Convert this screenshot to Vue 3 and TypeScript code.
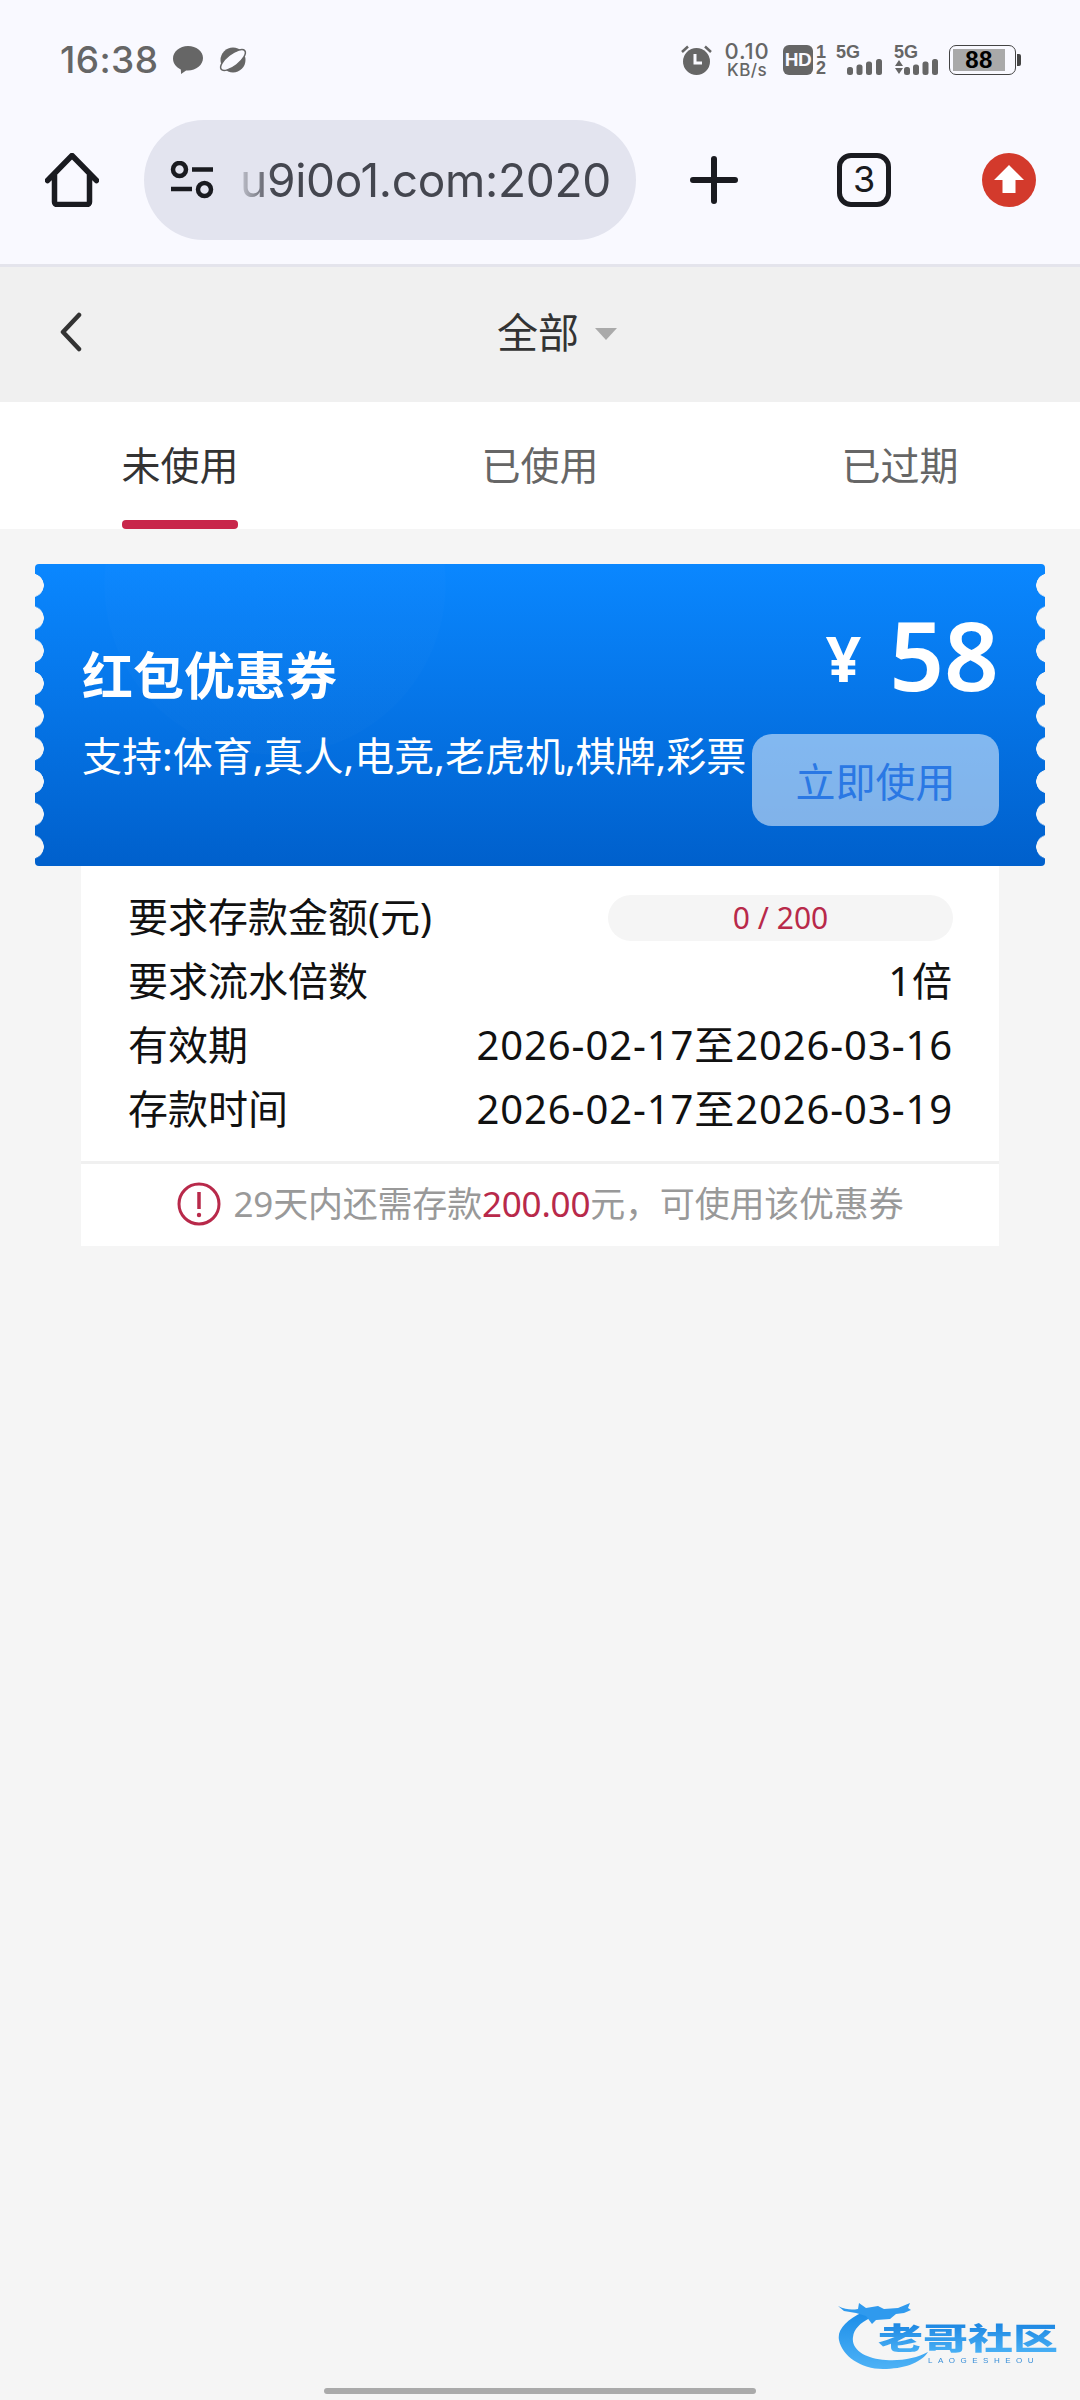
<script setup lang="ts">
interface DetailRow {
  label: string;
  value: string;
  pill?: boolean;
}

const tabs: string[] = ['未使用', '已使用', '已过期'];
const activeTab = 0;

const rows: DetailRow[] = [
  { label: '要求存款金额(元)', value: '0 / 200', pill: true },
  { label: '要求流水倍数', value: '1倍' },
  { label: '有效期', value: '2026-02-17至2026-03-16' },
  { label: '存款时间', value: '2026-02-17至2026-03-19' },
];
</script>

<template>
  <div class="page">
    <header class="chrome">
      <div class="status">
        <div class="status-left">
          <span class="time">16:38</span>
          <svg class="bubble" viewBox="0 0 30 28">
            <path d="M15 0C6.700 0 0 5.600 0 12.600c0 4.800 3.100 8.900 7.800 11l.3 4.400 5-3.500c.6.100 1.300.1 1.900.1 8.300 0 15-5.600 15-12.500S23.300 0 15 0z" fill="#666" />
          </svg>
          <svg class="planet" viewBox="0 0 30 26">
            <circle cx="15" cy="13" r="12.500" fill="#666" />
            <ellipse cx="15" cy="13" rx="15" ry="6" transform="rotate(-38 15 13)" fill="#f9f9ff" stroke="#666" stroke-width="1.500" />
          </svg>
        </div>
        <div class="status-right">
          <svg class="alarm" viewBox="0 0 31 30">
            <circle cx="15.500" cy="16.500" r="13.500" fill="#666" />
            <path d="M14 9v9h7" stroke="#f9f9ff" stroke-width="3" fill="none" />
            <path d="M1 7l6-5.500M30 7l-6-5.500" stroke="#666" stroke-width="2.500" fill="none" />
          </svg>
          <div class="speed">
            <span class="speed-num">0.10</span>
            <span class="speed-unit">KB/s</span>
          </div>
          <div class="hd">
            <span class="hd-box">HD</span>
            <span class="hd-nums"><i>1</i><i>2</i></span>
          </div>
          <div class="signal">
            <span class="five-g">5G</span>
            <svg class="bars" viewBox="0 0 35 16">
              <rect x="0" y="8" width="6" height="8" rx="2.500" fill="#666" />
              <rect x="9.500" y="5.500" width="6" height="10.500" rx="2.500" fill="#666" />
              <rect x="19" y="2.500" width="6" height="13.500" rx="2.500" fill="#666" />
              <rect x="29" y="0" width="6" height="16" rx="2.500" fill="#666" />
            </svg>
          </div>
          <div class="signal signal-two">
            <span class="five-g">5G</span>
            <svg class="bars bars-two" viewBox="0 0 44 16">
              <path d="M1 7l4-6 4 6zM1 9l4 6 4-6z" fill="#666" />
              <rect x="10" y="8" width="6" height="8" rx="2.500" fill="#666" />
              <rect x="19" y="5.500" width="6" height="10.500" rx="2.500" fill="#666" />
              <rect x="28.500" y="2.500" width="6" height="13.500" rx="2.500" fill="#666" />
              <rect x="38" y="0" width="6" height="16" rx="2.500" fill="#666" />
            </svg>
          </div>
          <div class="battery">
            <div class="battery-body">
              <div class="battery-fill">88</div>
            </div>
            <span class="battery-nub"></span>
          </div>
        </div>
      </div>

      <div class="toolbar">
        <svg class="tool-icon" viewBox="0 0 54 54">
          <path d="M2.500 27.500L27 2.500l24.500 25M9.500 22v27a2.500 2.500 0 0 0 2.500 2.500h30a2.500 2.500 0 0 0 2.500-2.500V22" fill="none" stroke="#1a1b20" stroke-width="5.500" stroke-linecap="round" stroke-linejoin="round" />
        </svg>
        <div class="omnibox">
          <svg class="tune" viewBox="0 0 44 38">
            <circle cx="9.500" cy="8.500" r="6.500" fill="none" stroke="#1a1b20" stroke-width="4.500" />
            <path d="M22 8.500h21M1 28h21" stroke="#1a1b20" stroke-width="4.500" />
            <circle cx="34.500" cy="28.500" r="6.500" fill="none" stroke="#1a1b20" stroke-width="4.500" />
          </svg>
          <span class="url">u9i0o1.com:2020</span>
        </div>
        <svg class="plus" viewBox="0 0 48 48">
          <path d="M3 24h42M24 3v42" stroke="#1a1b20" stroke-width="6" stroke-linecap="round" />
        </svg>
        <div class="tab-count">3</div>
        <svg class="tool-icon upgrade" viewBox="0 0 54 54">
          <circle cx="27" cy="27" r="27" fill="#d33a2c" />
          <path d="M27 12L12 27h8.500v13h13V27H42z" fill="#fff" />
        </svg>
      </div>
    </header>

    <div class="title-bar">
      <svg class="back" viewBox="0 0 24 40">
        <path d="M20 3L4 20l16 17" fill="none" stroke="#333" stroke-width="4.500" stroke-linecap="round" stroke-linejoin="round" />
      </svg>
      <div class="title">
        <span>全部</span>
        <i class="caret"></i>
      </div>
    </div>

    <nav class="tabs">
      <div
        v-for="(tab, index) in tabs"
        :key="tab"
        class="tab"
        :class="{ active: index === activeTab }"
      >
        <span class="tab-label">{{ tab }}</span>
        <i class="tab-bar"></i>
      </div>
    </nav>

    <section class="coupon">
      <div class="coupon-left">
        <h2 class="coupon-name">红包优惠券</h2>
        <p class="coupon-support">支持:体育,真人,电竞,老虎机,棋牌,彩票</p>
      </div>
      <div class="coupon-right">
        <div class="amount">
          <span class="yen">¥</span>
          <span class="money">58</span>
        </div>
        <button class="use-btn">立即使用</button>
      </div>
    </section>

    <section class="detail">
      <div class="rows">
        <div v-for="row in rows" :key="row.label" class="row">
          <span class="row-text">{{ row.label }}</span>
          <span v-if="row.pill" class="pill">{{ row.value }}</span>
          <span v-else class="row-text row-value">{{ row.value }}</span>
        </div>
      </div>
      <div class="notice">
        <svg class="notice-icon" viewBox="0 0 44 44">
          <circle cx="22" cy="22" r="20" fill="none" stroke="#b8294a" stroke-width="3" />
          <path d="M22 10v17" stroke="#b8294a" stroke-width="3.500" />
          <circle cx="22" cy="33" r="2.200" fill="#b8294a" />
        </svg>
        <span class="notice-text">29天内还需存款<b>200.00</b>元，可使用该优惠券</span>
      </div>
    </section>

    <div class="watermark">
      <svg class="dragon" viewBox="0 0 110 70">
        <defs>
          <linearGradient id="dragon-fill" x1="0" y1="0" x2="0" y2="1">
            <stop offset="0" stop-color="#1c8de8" />
            <stop offset="1" stop-color="#4db2f6" />
          </linearGradient>
        </defs>
        <path d="M25 12C8 20-1 30 1 40c3 16 22 29 44 29 20 0 38-6 45-17-11 6-26 9-42 8C28 59 13 50 15 37c1-8 7-14 17-19z" fill="url(#dragon-fill)" />
        <path d="M0 6c8 4 14 4 20 3l1-6 7 5 12-2 6 3 14-1 12-5-2 5 3 2-7 3-8 1-6 5-14 1-4 4-6-8-10-3-12-2z" fill="#2f9aee" />
      </svg>
      <div class="wm-text">
        <span class="wm-cn">老哥社区</span>
        <span class="wm-en">LAOGESHEOU</span>
      </div>
    </div>

    <i class="home-bar"></i>
  </div>
</template>

<style scoped>
.page {
  position: relative;
  width: 1080px;
  height: 2400px;
  overflow: hidden;
  background: #f5f5f5;
  font-family: "Noto Sans", "Noto Sans CJK SC", sans-serif;
  color: #111;
}

.chrome {
  background: #f9f9ff;
  border-bottom: 3px solid #e4e4ec;
  padding-bottom: 24px;
}

.status {
  height: 120px;
  padding: 0 59px 0 60px;
  display: flex;
  align-items: center;
  justify-content: space-between;
}

.status-left {
  display: flex;
  align-items: center;
}

.time {
  width: 97px;
  font-family: Inter, sans-serif;
  font-size: 37px;
  font-weight: 500;
  line-height: 44px;
  color: #666;
  letter-spacing: 0.4px;
  white-space: nowrap;
}

.bubble {
  width: 30px;
  height: 28px;
  margin-left: 16px;
}

.planet {
  width: 30px;
  height: 26px;
  margin-left: 15px;
}

.status-right {
  display: flex;
  align-items: center;
  height: 34px;
  color: #666;
}

.alarm {
  width: 31px;
  height: 30px;
}

.speed {
  width: 46px;
  margin-left: 12px;
  display: flex;
  flex-direction: column;
  align-items: center;
  font-family: Inter, sans-serif;
  font-weight: 500;
  white-space: nowrap;
}

.speed-num {
  font-size: 22px;
  line-height: 20px;
  letter-spacing: 0.8px;
}

.speed-unit {
  font-size: 17px;
  line-height: 18px;
  letter-spacing: 0.4px;
}

.hd {
  width: 43px;
  margin-left: 13px;
  display: flex;
  align-items: center;
  justify-content: space-between;
}

.hd-box {
  width: 30px;
  height: 30px;
  border-radius: 6px;
  background: #666;
  color: #f9f9ff;
  font-family: "Liberation Sans", sans-serif;
  font-size: 19px;
  font-weight: 700;
  line-height: 30px;
  text-align: center;
  letter-spacing: -0.5px;
}

.hd-nums {
  display: flex;
  flex-direction: column;
  align-items: center;
  font-family: "Liberation Sans", sans-serif;
  font-size: 18px;
  font-weight: 700;
  line-height: 16px;
}

.hd-nums i {
  font-style: normal;
}

.signal {
  position: relative;
  width: 46px;
  height: 30px;
  margin-left: 10px;
}

.signal-two {
  width: 44px;
  margin-left: 12px;
}

.five-g {
  display: block;
  font-family: "Liberation Sans", sans-serif;
  font-size: 18px;
  font-weight: 700;
  line-height: 14px;
}

.bars {
  position: absolute;
  right: 0;
  bottom: 0;
  width: 35px;
  height: 16px;
}

.bars-two {
  width: 44px;
}

.battery {
  width: 72px;
  margin-left: 11px;
  display: flex;
  align-items: center;
}

.battery-body {
  width: 67px;
  height: 30px;
  padding: 3px;
  border: 1.5px solid #444;
  border-radius: 7px;
  box-sizing: border-box;
}

.battery-fill {
  width: 52px;
  height: 100%;
  background: #a9a9a9;
  color: #000;
  font-family: "Liberation Sans", sans-serif;
  font-size: 24px;
  font-weight: 700;
  line-height: 21px;
  text-align: center;
  letter-spacing: 0.5px;
}

.battery-nub {
  width: 4px;
  height: 12px;
  margin-left: 1px;
  background: #444;
  border-radius: 0 2px 2px 0;
}

.toolbar {
  height: 120px;
  display: flex;
  align-items: center;
  padding-left: 45px;
}

.tool-icon {
  width: 54px;
  height: 54px;
}

.omnibox {
  width: 492px;
  height: 120px;
  margin-left: 45px;
  padding-left: 26px;
  box-sizing: border-box;
  display: flex;
  align-items: center;
  background: #e3e4ef;
  border-radius: 60px;
}

.tune {
  width: 44px;
  height: 38px;
}

.url {
  margin-left: 26px;
  font-family: Inter, sans-serif;
  font-size: 46px;
  line-height: 60px;
  letter-spacing: -0.3px;
  color: #44464f;
  white-space: nowrap;
  -webkit-mask-image: linear-gradient(90deg, rgba(0, 0, 0, 0.2), #000 34px);
  mask-image: linear-gradient(90deg, rgba(0, 0, 0, 0.2), #000 34px);
}

.plus {
  width: 48px;
  height: 48px;
  margin-left: 54px;
}

.tab-count {
  width: 54px;
  height: 54px;
  margin-left: 99px;
  box-sizing: border-box;
  border: 5.5px solid #1a1b20;
  border-radius: 14px;
  font-family: Inter, sans-serif;
  font-size: 36px;
  line-height: 43px;
  text-align: center;
  color: #1a1b20;
}

.upgrade {
  margin-left: 91px;
}

.title-bar {
  position: relative;
  height: 135px;
  background: #f0f0f0;
  display: flex;
  align-items: center;
  justify-content: center;
}

.back {
  position: absolute;
  left: 59px;
  top: 45px;
  width: 24px;
  height: 40px;
}

.title {
  display: flex;
  align-items: center;
  margin-left: 34px;
  font-size: 41px;
  line-height: 56px;
  color: #333;
  transform: translateY(-3px);
}

.caret {
  width: 0;
  height: 0;
  margin-left: 16px;
  margin-top: 4px;
  border-left: 11px solid transparent;
  border-right: 11px solid transparent;
  border-top: 12px solid #aaa;
}

.tabs {
  height: 127px;
  background: #fff;
  display: grid;
  grid-template-columns: repeat(3, 360px);
}

.tab {
  display: flex;
  flex-direction: column;
  align-items: center;
  padding-top: 37px;
  color: #666;
}

.tab.active {
  color: #333;
}

.tab-label {
  font-size: 39px;
  line-height: 52px;
}

.tab-bar {
  width: 116px;
  height: 9px;
  margin-top: 29px;
  border-radius: 4px;
}

.tab.active .tab-bar {
  background: #c8264a;
}

.coupon {
  position: relative;
  height: 302px;
  margin: 35px 35px 0;
  padding: 0 46px 0 47px;
  display: flex;
  justify-content: space-between;
  color: #fff;
  border-radius: 4px;
  background:
    radial-gradient(circle at 240px 20px, rgba(255, 255, 255, 0.012) 0 170px, transparent 171px),
    linear-gradient(180deg, #0a87ff 0%, #0060cc 100%);
}

.coupon::before,
.coupon::after {
  content: "";
  position: absolute;
  top: 5px;
  bottom: 0;
  width: 9px;
  background-size: 9px 32.700px;
  background-repeat: repeat-y;
}

.coupon::before {
  left: 0;
  background-image: radial-gradient(circle at -3px 50%, #f5f5f5 11.500px, transparent 12px);
}

.coupon::after {
  right: 0;
  background-image: radial-gradient(circle at 12px 50%, #f5f5f5 11.500px, transparent 12px);
}

.coupon-left {
  padding-top: 76px;
  white-space: nowrap;
}

.coupon-name {
  margin: 0;
  font-size: 51px;
  font-weight: 700;
  line-height: 70px;
}

.coupon-support {
  margin: 16px 0 0;
  font-size: 40px;
  line-height: 60px;
}

.coupon-right {
  display: flex;
  flex-direction: column;
  align-items: flex-end;
  padding-top: 40px;
}

.amount {
  display: flex;
  align-items: center;
  height: 100px;
}

.yen {
  font-size: 62px;
  font-weight: 700;
  line-height: 70px;
  margin-top: 8px;
}

.money {
  margin-left: 28px;
  font-size: 96px;
  font-weight: 600;
  line-height: 100px;
}

.use-btn {
  width: 247px;
  height: 92px;
  margin-top: 30px;
  border: 0;
  padding: 0;
  border-radius: 20px;
  background: rgba(255, 255, 255, 0.5);
  color: #2a78e4;
  font-family: inherit;
  font-size: 40px;
  letter-spacing: 0;
}

.detail {
  margin: 0 81px;
  background: #fff;
}

.rows {
  padding: 20px 46px 19px 47px;
  border-bottom: 3px solid #f0f0f0;
}

.row {
  height: 64px;
  display: flex;
  align-items: center;
  justify-content: space-between;
  font-size: 40px;
  white-space: nowrap;
}

.row-text {
  padding-bottom: 6px;
}

.row-value {
  letter-spacing: 0.9px;
}

.pill {
  width: 345px;
  height: 46px;
  border-radius: 23px;
  background: #f5f5f5;
  color: #b8294a;
  font-size: 30px;
  line-height: 46px;
  text-align: center;
}

.notice {
  height: 82px;
  display: flex;
  align-items: center;
  justify-content: center;
  color: #999;
  font-size: 35px;
  white-space: nowrap;
}

.notice-text {
  padding-bottom: 8px;
  letter-spacing: -0.2px;
}

.notice b {
  font-weight: 400;
  color: #b8294a;
}

.notice-icon {
  width: 44px;
  height: 44px;
  margin-right: 13px;
  margin-top: -2px;
}

.watermark {
  position: absolute;
  left: 838px;
  top: 2300px;
  width: 224px;
  height: 72px;
  filter: blur(0.7px);
}

.dragon {
  position: absolute;
  left: 0;
  top: 0;
  width: 110px;
  height: 70px;
}

.wm-text {
  position: absolute;
  left: 40px;
  top: 23px;
  display: flex;
  flex-direction: column;
  align-items: flex-start;
}

.wm-cn {
  display: inline-block;
  font-size: 30px;
  font-weight: 900;
  line-height: 30px;
  color: transparent;
  background: linear-gradient(180deg, #1c86e2, #49b0f5);
  -webkit-background-clip: text;
  background-clip: text;
  white-space: nowrap;
  transform: scaleX(1.5);
  transform-origin: left center;
}

.wm-en {
  margin-top: 3px;
  margin-left: 50px;
  font-family: "Liberation Sans", sans-serif;
  font-size: 8px;
  line-height: 10px;
  letter-spacing: 5.5px;
  color: #3a8fd8;
}

.home-bar {
  position: absolute;
  left: 324px;
  bottom: 6px;
  width: 432px;
  height: 6px;
  border-radius: 3px;
  background: #aaa;
}
</style>
